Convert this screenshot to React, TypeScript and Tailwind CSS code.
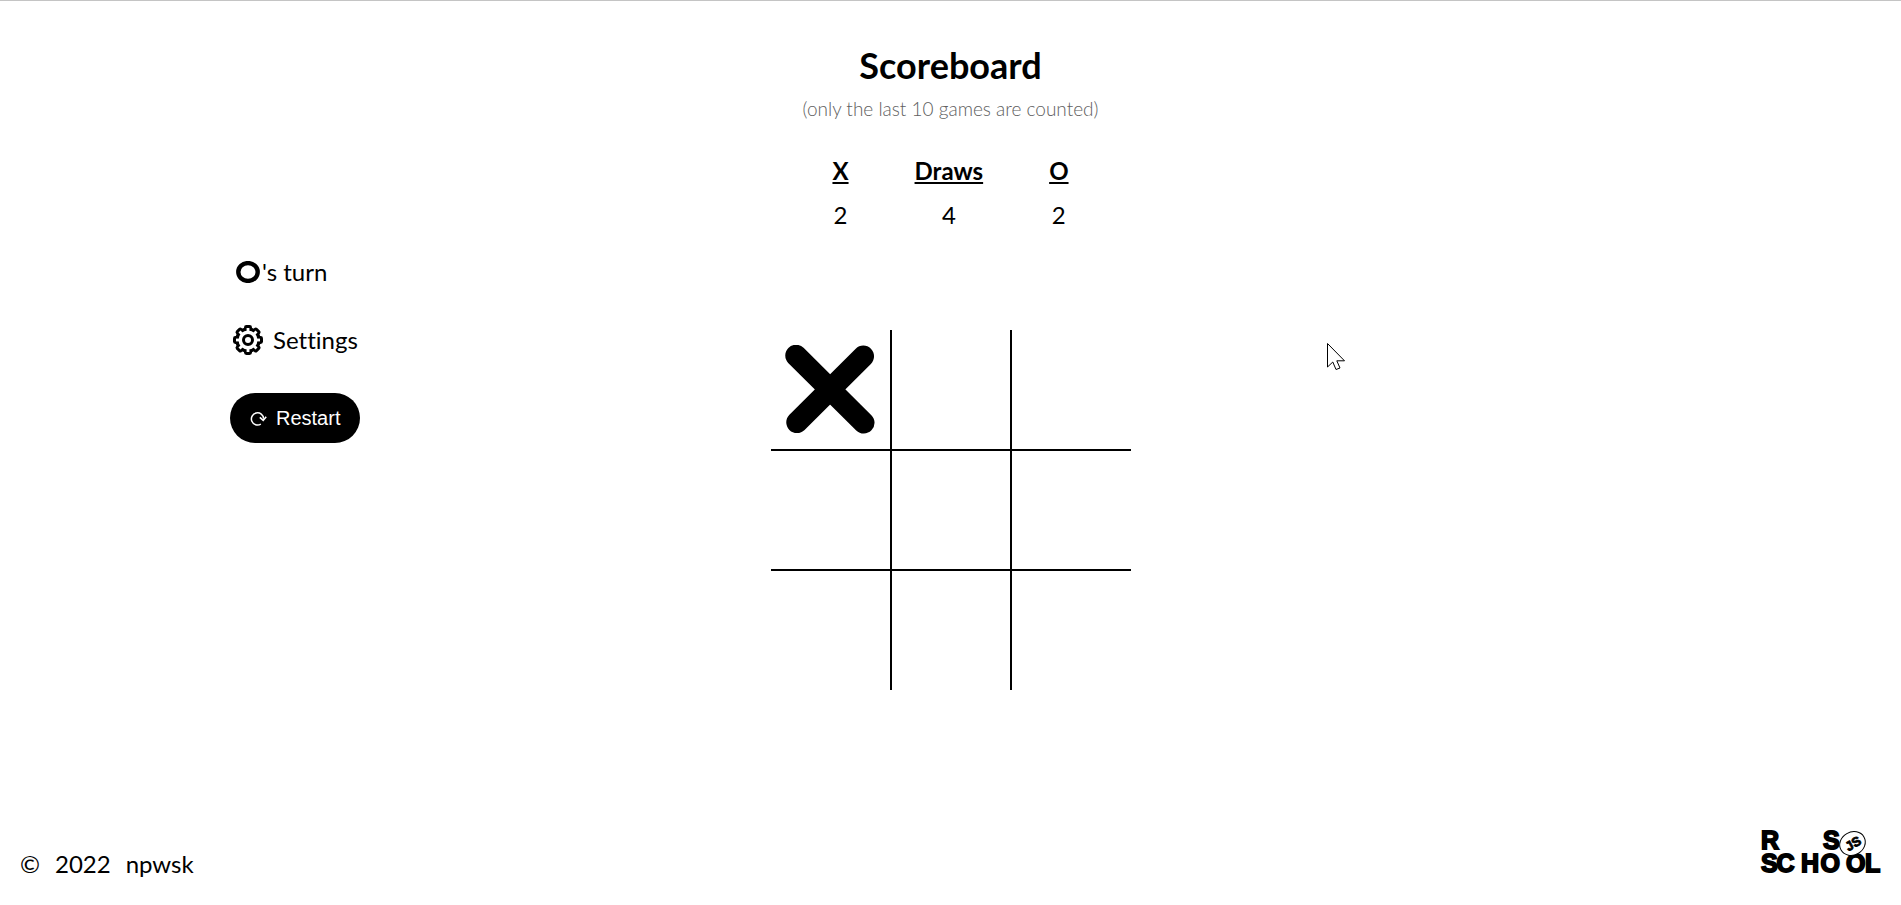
import { useState } from "react";

type Mark = "X" | "O" | null;

function CrossIcon() {
  return (
    <svg viewBox="0 0 90 90" className="h-[90px] w-[90px]" aria-hidden="true">
      <path
        d="M11 10.5 78.8 77.8M78.3 11.3 12 77.3"
        stroke="black"
        strokeWidth="21.5"
        strokeLinecap="round"
      />
    </svg>
  );
}

function NoughtIcon({ className }: { className: string }) {
  return (
    <svg viewBox="0 0 24 22" className={className} aria-label="O" role="img">
      <ellipse cx="12" cy="11" rx="9.7" ry="8.9" fill="none" stroke="black" strokeWidth="4.4" />
    </svg>
  );
}

function GearIcon() {
  const teeth = [0, 45, 90, 135, 180, 225, 270, 315];
  return (
    <svg viewBox="0 0 30 30" className="h-[30px] w-[30px]" aria-hidden="true">
      <g>
        {teeth.map((angle) => (
          <rect
            key={angle}
            x="11"
            y="0"
            width="8"
            height="9"
            rx="2.4"
            transform={`rotate(${angle} 15 15)`}
          />
        ))}
        <circle cx="15" cy="15" r="12.8" />
      </g>
      <g fill="white">
        {teeth.map((angle) => (
          <rect
            key={angle}
            x="13.6"
            y="3"
            width="2.8"
            height="6"
            transform={`rotate(${angle} 15 15)`}
          />
        ))}
        <circle cx="15" cy="15" r="9.5" />
      </g>
      <circle cx="15" cy="15" r="4.5" fill="none" stroke="black" strokeWidth="3" />
    </svg>
  );
}

function RestartIcon() {
  return (
    <svg viewBox="0 0 18 16" className="h-4 w-[18px]" fill="none" stroke="white" aria-hidden="true">
      <path d="M10.8 14.1A6.1 6.1 0 1 1 13.6 8.8" strokeWidth="1.5" />
      <path d="M9.8 7.4 13.2 10.4 16.2 6.8" strokeWidth="1.6" />
    </svg>
  );
}

function SchoolLogo() {
  return (
    <svg
      viewBox="0 -6 120 56"
      className="h-14 w-[120px] overflow-visible"
      fontFamily="'Liberation Sans', Arial, sans-serif"
      fontWeight="700"
      fontSize="25"
      stroke="black"
      strokeWidth="1.8"
      role="img"
      aria-label="RS School"
    >
      <text x="0 62" y="18.5">RS</text>
      <text x="0 15.5 40 59.5 85 104" y="42">SCHOOL</text>
      <ellipse
        cx="91.5"
        cy="13.5"
        rx="13.2"
        ry="11.4"
        fill="white"
        strokeWidth="1"
        transform="rotate(-30 91.5 13.5)"
      />
      <text x="84" y="18.3" fontSize="13" strokeWidth="0.8" transform="rotate(-30 91.5 13.5)">
        JS
      </text>
    </svg>
  );
}

function PointerIcon() {
  return (
    <svg
      viewBox="0 0 20 29"
      className="pointer-events-none absolute top-[341px] left-[1326px] h-[29px] w-5"
      fill="white"
      stroke="black"
      aria-hidden="true"
    >
      <path d="M1.5 1.5V25L6.8 20 10 27.5 14 26 10.8 18.8H18.5Z" strokeWidth="1" />
    </svg>
  );
}

export default function App() {
  const [cells, setCells] = useState<Mark[]>(["X", null, null, null, null, null, null, null, null]);
  const next: Mark = cells.filter(Boolean).length % 2 ? "O" : "X";

  const play = (index: number) => {
    if (cells[index]) return;
    setCells(cells.map((mark, i) => (i === index ? next : mark)));
  };

  return (
    <div className="relative flex min-h-screen flex-col border-t border-[#c4c4c4] bg-white font-['Lato',sans-serif] text-2xl text-black [font-variant-ligatures:none]">
      <header className="flex flex-col items-center pt-11">
        <h1 className="text-4xl font-bold">Scoreboard</h1>
        <p className="mt-2 text-[19px] leading-8 font-light text-[#606060]">(only the last 10 games are counted)</p>
        <table className="mt-6 text-center">
          <thead>
            <tr className="h-11">
              <th className="px-[33px] font-bold underline" scope="col">X</th>
              <th className="px-[33px] font-bold underline" scope="col">Draws</th>
              <th className="px-[33px] font-bold underline" scope="col">O</th>
            </tr>
          </thead>
          <tbody>
            <tr className="h-11">
              <td>2</td>
              <td>4</td>
              <td>2</td>
            </tr>
          </tbody>
        </table>
      </header>

      <main className="grid grow grid-cols-[1fr_auto_1fr] items-start pt-[19px]">
        <aside className="flex flex-col items-start gap-9 pl-[230px]">
          <p className="flex items-center px-1">
            {next === "O" ? <NoughtIcon className="mx-0.5 h-[22px] w-6" /> : <strong>X</strong>}
            <span>'s turn</span>
          </p>
          <button type="button" className="flex items-center gap-2.5 px-[3px]">
            <GearIcon />
            Settings
          </button>
          <button
            type="button"
            onClick={() => setCells(Array(9).fill(null))}
            className="mt-px flex h-[50px] items-center gap-2 rounded-full bg-black px-5 font-['Liberation_Sans',Arial,sans-serif] text-xl text-white"
          >
            <RestartIcon />
            Restart
          </button>
        </aside>

        <div className="mt-[74px] grid grid-cols-[119px_118px_119px] grid-rows-[119px_118px_119px] gap-0.5 bg-black">
          {cells.map((mark, index) => (
            <button
              key={index}
              type="button"
              aria-label={`Cell ${index + 1}`}
              onClick={() => play(index)}
              className="flex items-center justify-center bg-white"
            >
              {mark === "X" && <CrossIcon />}
              {mark === "O" && <NoughtIcon className="h-[90px] w-[90px]" />}
            </button>
          ))}
        </div>
      </main>

      <footer className="flex items-end justify-between px-5 pb-[25px]">
        <div className="flex gap-[15px]">
          <span>©</span>
          <span>2022</span>
          <a href="#npwsk">npwsk</a>
        </div>
        <a href="#school">
          <SchoolLogo />
        </a>
      </footer>

      <PointerIcon />
    </div>
  );
}
